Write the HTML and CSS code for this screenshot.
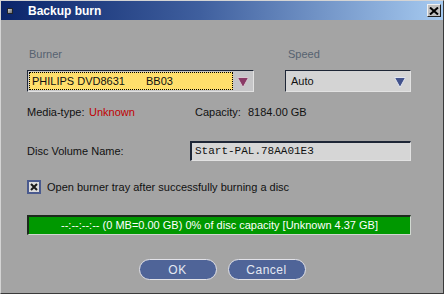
FILE: index.html
```html
<!DOCTYPE html>
<html lang="en">
<head>
    <meta charset="UTF-8">
    <title>Backup burn</title>
    <link rel="stylesheet" href="styles.css">
</head>
<body>
    <div class="window">
        <div class="titlebar">
            <span class="sysicon"></span>
            <span class="title">Backup burn</span>
            <span class="close">
                <svg width="10" height="8" viewBox="0 0 10 8"><path d="M1 0.5 L9 7.5 M9 0.5 L1 7.5" stroke="#000" stroke-width="2"/></svg>
            </span>
        </div>

        <div class="content">
            <div class="row labels">
                <span class="lbl burner-lbl">Burner</span>
                <span class="lbl">Speed</span>
            </div>

            <div class="row combos">
                <div class="combo burner">
                    <div class="combo-value">
                        <span class="drive">PHILIPS DVD8631</span><span>BB03</span>
                    </div>
                    <span class="combo-arrow">
                        <svg width="12" height="11" viewBox="0 0 12 11"><path d="M0.5 0.5 H11.5 L6 10.5 Z" fill="#8a3a66" stroke="#d8c8d0" stroke-width="1"/></svg>
                    </span>
                </div>
                <div class="combo speed">
                    <div class="combo-value">Auto</div>
                    <span class="combo-arrow">
                        <svg width="12" height="11" viewBox="0 0 12 11"><path d="M0.5 0.5 H11.5 L6 10.5 Z" fill="#42528c" stroke="#e0e4ee" stroke-width="1"/></svg>
                    </span>
                </div>
            </div>

            <div class="row info">
                <span class="media-lbl">Media-type:</span>
                <span class="media-val">Unknown</span>
                <span class="cap-lbl">Capacity:</span>
                <span>8184.00 GB</span>
            </div>

            <div class="row volume">
                <span class="volume-lbl">Disc Volume Name:</span>
                <div class="textbox">Start-PAL.78AA01E3</div>
            </div>

            <div class="row check">
                <span class="checkbox">
                    <svg width="8" height="8" viewBox="0 0 8 8"><path d="M1 1 L7 7 M7 1 L1 7" stroke="#1a1a1a" stroke-width="2"/></svg>
                </span>
                <span>Open burner tray after successfully burning a disc</span>
            </div>

            <div class="progress">--:--:--:-- (0 MB=0.00 GB) 0% of disc capacity [Unknown 4.37 GB]</div>

            <div class="buttons">
                <button class="pill">OK</button>
                <button class="pill">Cancel</button>
            </div>
        </div>
    </div>
</body>
</html>
```

FILE: styles.css
```css
body {
    margin: 0;
    font-family: "Liberation Sans", Arial, sans-serif;
    font-size: 11px;
    color: #111;
}
.window {
    width: 444px;
    height: 294px;
    box-sizing: border-box;
    border: 1px solid;
    border-color: #d4d4d4 #3a3a3a #3a3a3a #d4d4d4;
    background-color: #a4a4a4;
    overflow: hidden;
}
.titlebar {
    height: 19px;
    display: flex;
    align-items: center;
    padding: 0 2px 0 6px;
    background: linear-gradient(to right, #0a246a, #3f5f9e 45%, #a6caf0);
}
.sysicon {
    width: 6px;
    height: 6px;
    box-sizing: border-box;
    border: 1px solid #20242c;
    background: linear-gradient(135deg, #d0d0d0, #707070);
    margin-right: 15px;
}
.title {
    color: #fff;
    font-weight: bold;
    font-size: 12px;
}
.close {
    margin-left: auto;
    width: 14px;
    height: 13px;
    box-sizing: border-box;
    border: 1px solid;
    border-color: #f0f0f0 #202020 #202020 #f0f0f0;
    background-color: #c0c0c0;
    display: flex;
    align-items: center;
    justify-content: center;
}
.content {
    padding-left: 26px;
}
.row {
    display: flex;
    align-items: center;
}
.labels {
    margin-top: 28px;
    line-height: 13px;
    color: #566270;
}
.burner-lbl {
    margin-left: 2px;
    width: 259px;
}
.combos {
    margin-top: 9px;
    gap: 31px;
}
.combo {
    height: 22px;
    box-sizing: border-box;
    border: 1px solid;
    border-color: #1e2636 #e2e2e2 #e2e2e2 #1e2636;
    display: flex;
    align-items: center;
    background-color: #d4d4d4;
}
.burner {
    width: 227px;
    padding: 1px;
    background-color: #c6c6c8;
}
.burner .combo-value {
    flex: 1;
    height: 100%;
    box-sizing: border-box;
    background-color: #ffdf6c;
    border: 1px dotted #000;
    display: flex;
    align-items: center;
    padding-left: 2px;
}
.drive {
    width: 114px;
}
.speed {
    width: 126px;
    padding-left: 5px;
}
.speed .combo-value {
    flex: 1;
}
.combo-arrow {
    width: 19px;
    display: flex;
    justify-content: center;
    padding-top: 2px;
}
.speed .combo-arrow {
    width: 20px;
}
.info {
    margin-top: 14px;
    line-height: 13px;
}
.media-lbl {
    width: 62px;
}
.media-val {
    width: 106px;
    color: #c00000;
}
.cap-lbl {
    width: 53px;
}
.volume {
    margin-top: 22px;
}
.volume-lbl {
    width: 163px;
}
.textbox {
    width: 221px;
    height: 20px;
    box-sizing: border-box;
    border: 1px solid;
    border-color: #1e2636 #e2e2e2 #e2e2e2 #1e2636;
    border-width: 2px 1px 1px 2px;
    background-color: #d6d6d6;
    font-family: "Liberation Mono", "Courier New", monospace;
    font-size: 11px;
    line-height: 16px;
    padding-left: 3px;
    color: #111;
}
.check {
    margin-top: 19px;
    gap: 6px;
}
.checkbox {
    width: 14px;
    height: 14px;
    box-sizing: border-box;
    border: 2px solid #4a5a8e;
    background-color: #dcdcdc;
    display: flex;
    align-items: center;
    justify-content: center;
}
.progress {
    margin-top: 21px;
    width: 384px;
    height: 20px;
    box-sizing: border-box;
    border: 1px solid;
    border-color: #1c2a1c #d0d8d0 #d0d8d0 #1c2a1c;
    border-width: 2px 1px 1px 2px;
    background-color: #009800;
    color: #fff;
    text-align: center;
    line-height: 16px;
}
.buttons {
    margin: 24px 0 0 -26px;
    display: flex;
    justify-content: center;
    gap: 11px;
}
.pill {
    width: 78px;
    height: 21px;
    border: 1px solid #e2e2e8;
    border-radius: 11px;
    background-color: #4f6498;
    color: #e4e8f2;
    font-family: "Liberation Sans", Arial, sans-serif;
    font-size: 12px;
    letter-spacing: 0.5px;
    padding: 0;
}
```
